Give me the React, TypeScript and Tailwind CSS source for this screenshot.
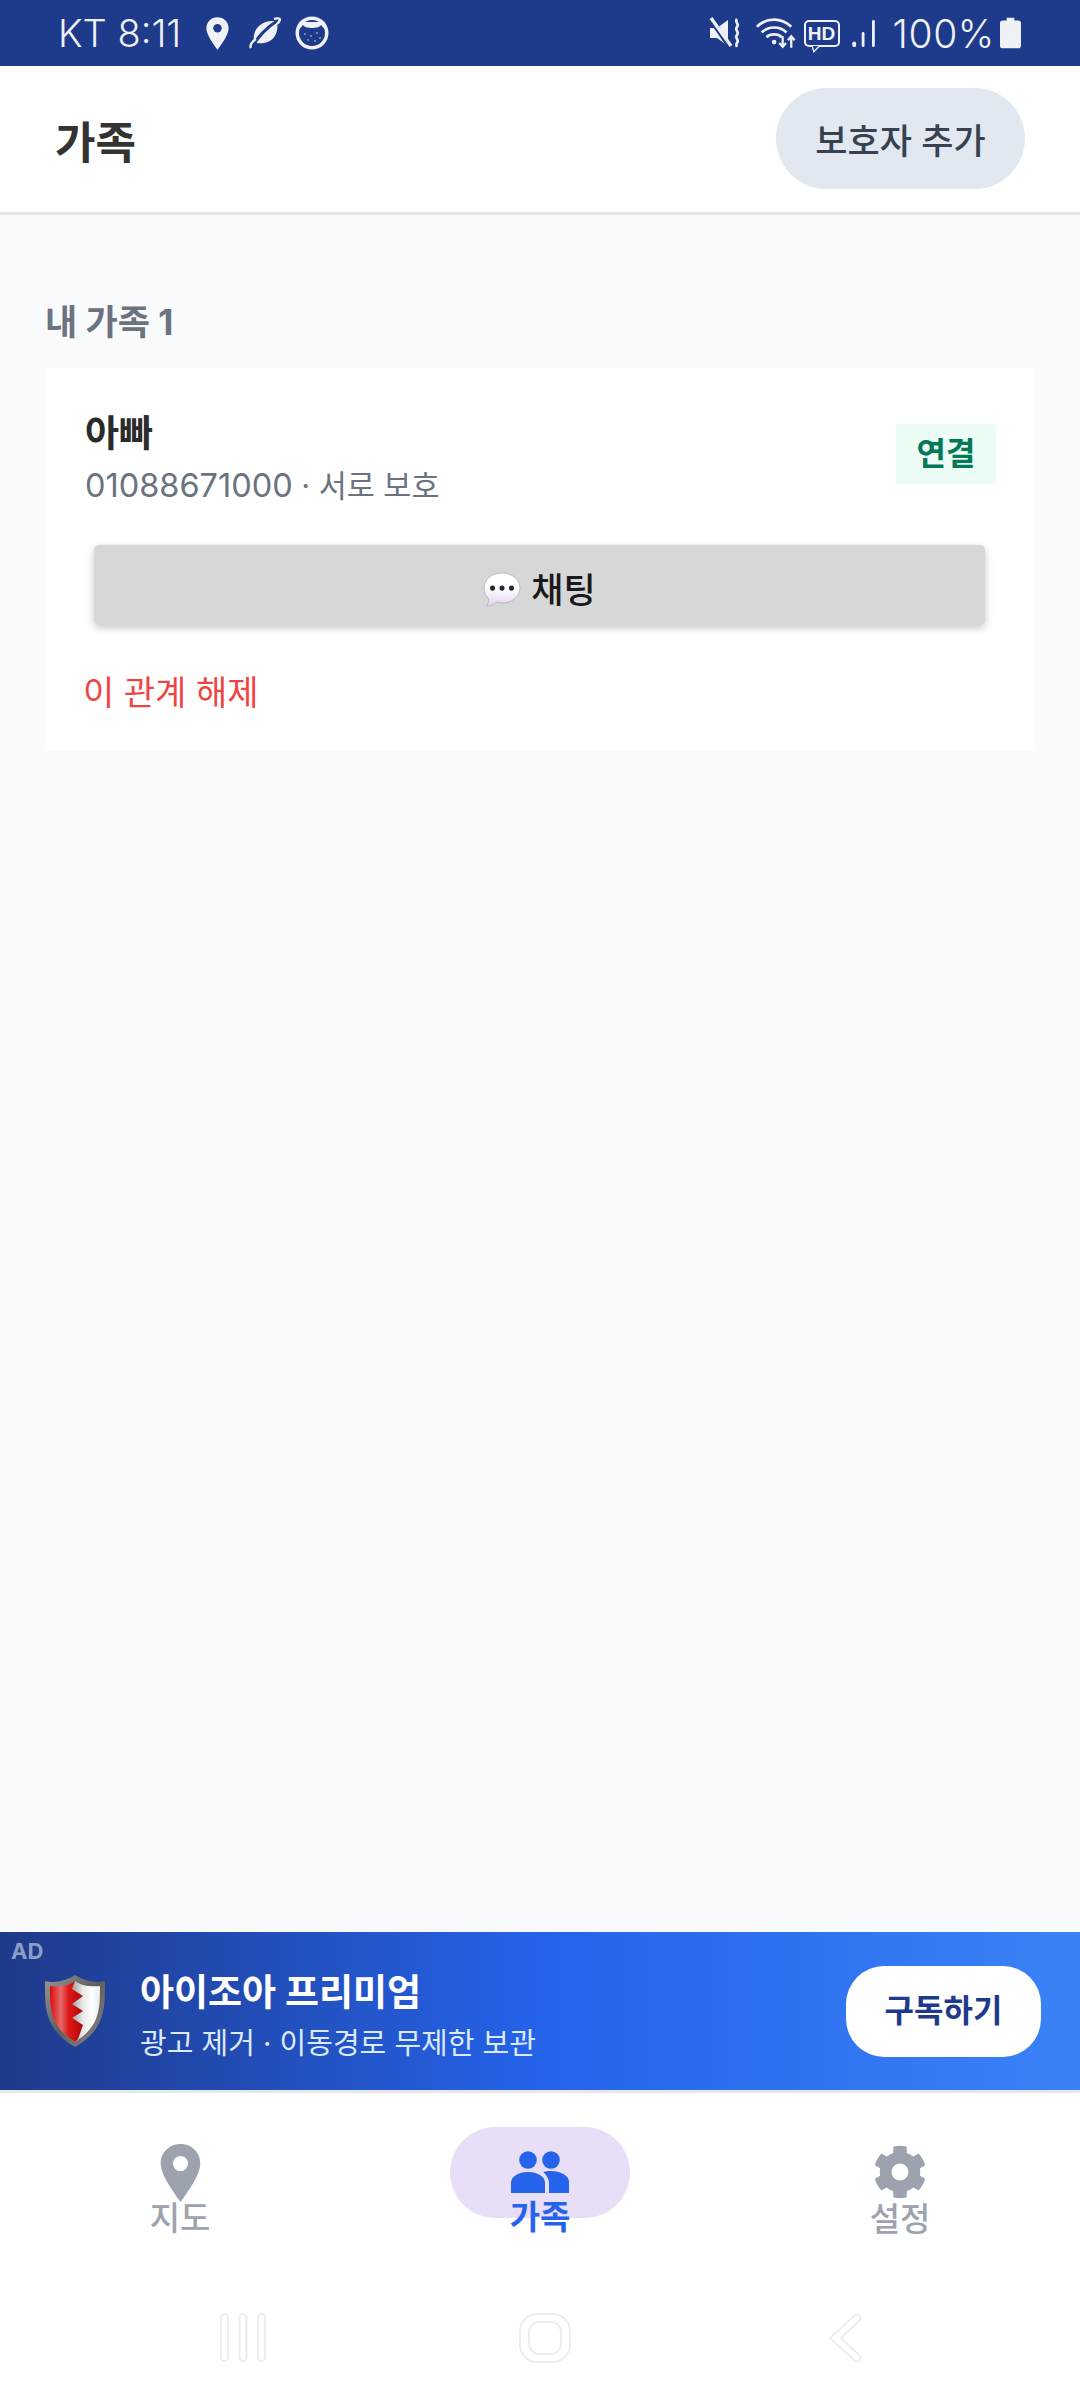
import React from "react";
import { FaCog } from "react-icons/fa";

const kr = "font-['Inter','Noto_Sans_CJK_KR',sans-serif]";

function Pin({ className, hole }: { className?: string; hole: string }) {
  return (
    <svg viewBox="0 0 24 34" className={className}>
      <path d="M12 0C5.4 0 .4 5 .4 11.4 .4 18 7 27 12 34c5-7 11.6-16 11.6-22.6C23.600 5 18.600 0 12 0Z" fill="currentColor" />
      <circle cx="12" cy="11.5" r="4.4" fill={hole} />
    </svg>
  );
}

function StatusLeft() {
  return (
    <div className="flex items-center">
      <span className="w-[129px] whitespace-nowrap text-[38px] leading-none font-light text-[#eff1f7]">KT 8:11</span>
      <Pin className="ml-[19px] w-[23px] h-[33px] text-[#eff1f7]" hole="#1e3a8a" />
      <svg viewBox="0 0 32 34" className="ml-[20px] w-[32px] h-[34px]">
        <path d="M5 25C3 14 12 5 23 5c2 0 4 .4 5 1 2 10-3 20-13 21-4 .4-8 .6-10-2Z" fill="#eff1f7" />
        <path d="M3 31C8 22 18 11 28 5" stroke="#1e3a8a" strokeWidth="3" fill="none" />
        <path d="M2 32C0 29 4 25 7 23M25 3c3-1 6-1 6 1-1 2-2 3-3 4" stroke="#eff1f7" strokeWidth="2.4" fill="none" />
      </svg>
      <svg viewBox="0 0 34 34" className="ml-[14px] w-[34px] h-[34px]">
        <circle cx="17" cy="17" r="16.5" fill="#eff1f7" />
        <circle cx="17" cy="17" r="13" fill="#1e3a8a" />
        <path d="M4 6h26v7c-2-1-3-3-4-4-1 2-4 3-9 3s-8-1-9-3c-1 1-2 3-4 4Z" fill="#eff1f7" />
        <g fill="#8b9ac4">
          <circle cx="10" cy="18" r="1" /><circle cx="16" cy="20" r="1" /><circle cx="22" cy="17" r="1" /><circle cx="13" cy="24" r="1" /><circle cx="20" cy="25" r="1" /><circle cx="25" cy="22" r="1" />
        </g>
      </svg>
    </div>
  );
}

function StatusRight() {
  return (
    <div className="flex items-center">
      <svg viewBox="0 0 32 32" className="w-[32px] h-[32px]">
        <path d="M1 11h7L19 3v26L8 21H1Z" fill="#eff1f7" />
        <path d="M1 1l20 29" stroke="#1e3a8a" strokeWidth="5" />
        <path d="M2 1l20 28" stroke="#eff1f7" strokeWidth="3.400" />
        <path d="M28 2c-3 3 3 5 0 8s3 5 0 8 3 5 0 8c-1 1-1 2 0 4" stroke="#eff1f7" strokeWidth="2.600" fill="none" />
      </svg>
      <svg viewBox="0 0 44 34" className="ml-[14px] w-[42px] h-[33px]">
        <path d="M2 10C12 0 28 0 38 10M7 16C14 9 26 9 33 16M12 21c4-4 12-4 16 0" stroke="#eff1f7" strokeWidth="2.8" fill="none" />
        <circle cx="20" cy="26" r="2.4" fill="#eff1f7" />
        <path d="M29 20v11M25.5 27l3.5 4 3.500-4M38 32V20M34.5 24l3.500-4 3.500 4" stroke="#eff1f7" strokeWidth="2.4" fill="none" />
      </svg>
      <div className="relative ml-[7px] w-[36px] h-[27px] rounded-[5px] border-2 border-[#eff1f7] flex items-center justify-center">
        <span className="text-[19px] leading-none font-bold text-[#eff1f7] font-['Liberation_Sans',sans-serif]">HD</span>
        <svg viewBox="0 0 10 8" className="absolute left-[6px] top-[23px] w-[9px] h-[8px]">
          <path d="M0 0h9L2 7Z" fill="#1e3a8a" stroke="#eff1f7" strokeWidth="1.5" />
        </svg>
      </div>
      <svg viewBox="0 0 28 32" className="ml-[9px] w-[31px] h-[30px]">
        <rect x="1" y="25" width="4" height="6" rx="2" fill="#eff1f7" />
        <rect x="11" y="15" width="3" height="16" rx="1.5" fill="#eff1f7" />
        <rect x="22" y="2" width="3" height="29" rx="1.5" fill="#eff1f7" />
      </svg>
      <span className="ml-[13px] text-[39px] tracking-[0.6px] leading-none font-light text-[#eff1f7]">100%</span>
      <svg viewBox="0 0 22 32" className="ml-[5px] w-[21px] h-[32px]">
        <path d="M7 0h8v3h4a3 3 0 0 1 3 3v23a3 3 0 0 1-3 3H3a3 3 0 0 1-3-3V6a3 3 0 0 1 3-3h4Z" fill="#eff1f7" />
      </svg>
    </div>
  );
}

function ChatEmoji() {
  return (
    <svg viewBox="0 0 40 38" className="w-[38px] h-[36px]">
      <defs>
        <linearGradient id="bubble" x1="0" y1="0" x2="0" y2="1">
          <stop offset="0.45" stopColor="#ffffff" />
          <stop offset="1" stopColor="#e3d3ee" />
        </linearGradient>
      </defs>
      <path d="M20 1C9 1 1 8 1 17c0 5 2 9 5 11 0 3-1 6-2 8 4 0 8-2 10-4 2 .5 4 .8 6 .8 11 0 19-7 19-15.800S31 1 20 1Z" fill="url(#bubble)" stroke="#bdb3c4" strokeWidth="1" />
      <circle cx="10" cy="17" r="2.700" fill="#2a2530" />
      <circle cx="20" cy="17" r="2.700" fill="#2a2530" />
      <circle cx="30" cy="17" r="2.700" fill="#2a2530" />
    </svg>
  );
}

function Shield() {
  return (
    <svg viewBox="0 0 60 72" className="w-[62px] h-[72px]">
      <defs>
        <linearGradient id="rim" x1="0" y1="0" x2="1" y2="1">
          <stop offset="0" stopColor="#989898" />
          <stop offset="0.5" stopColor="#5e5e5e" />
          <stop offset="1" stopColor="#8a8a8a" />
        </linearGradient>
        <linearGradient id="silver" x1="0" y1="0" x2="1" y2="0">
          <stop offset="0.4" stopColor="#8f8f8f" />
          <stop offset="0.65" stopColor="#e8e8e8" />
          <stop offset="0.85" stopColor="#ffffff" />
          <stop offset="1" stopColor="#e8e8e8" />
        </linearGradient>
        <linearGradient id="red" x1="0" y1="0" x2="38" y2="0" gradientUnits="userSpaceOnUse">
          <stop offset="0.15" stopColor="#e01010" />
          <stop offset="0.42" stopColor="#e26a6a" />
          <stop offset="0.62" stopColor="#e01818" />
          <stop offset="1" stopColor="#b00808" />
        </linearGradient>
      </defs>
      <path d="M0 6c8 2 19 1 30-6 11 7 22 8 30 6 0 26 1 48-30 66C-1 54 0 32 0 6Z" fill="url(#rim)" />
      <path d="M5 11c9 1 18 0 25-5 7 5 16 6 25 5 0 23 0 40-25 56C5 51 5 34 5 11Z" fill="url(#silver)" />
      <path d="M5 11c9 1 18 0 25-5L27 14 38 21 27 29 38 36 27 43 38 50 33 64 30 67C5 51 5 34 5 11Z" fill="url(#red)" />
    </svg>
  );
}

function People() {
  return (
    <svg viewBox="0 0 58 42" className="w-[58px] h-[42px] text-[#2563eb]" fill="currentColor">
      <circle cx="17" cy="9" r="8.800" />
      <circle cx="40" cy="9" r="8.800" />
      <path d="M0 42V32c0-7 8-11 17-11s17 4 17 11v10Z" />
      <path d="M38 42V32c0-4-2-8-6-11 2-.5 5-1 8-1 9 0 18 4 18 11v11Z" />
    </svg>
  );
}

export default function App() {
  return (
    <div className={`flex flex-col w-[1080px] h-[2408px] bg-[#f9fafb] ${kr}`}>
      <div className="flex h-[66px] bg-[#1e3a8a] items-center justify-between pl-[58px] pr-[59px]">
        <StatusLeft />
        <StatusRight />
      </div>

      <header className="flex h-[149px] items-center justify-between bg-white border-b-[3px] border-[#e5e7eb] pl-[55px] pr-[55px] pb-[1px]">
        <h1 className="mt-[8px] text-[44px] leading-none font-bold text-[#333333]">가족</h1>
        <button className="w-[249px] h-[101px] pt-[5px] rounded-full bg-[#e2e8f0] text-[35px] font-medium text-[#374151]">보호자 추가</button>
      </header>

      <main className="flex-1 px-[45px] pt-[82px]">
        <h2 className="text-[35px] leading-[50px] font-bold text-[#6b7280]">내 가족 1</h2>
        <section className="mt-[21px] h-[382px] bg-white px-[40px] pt-[40px]">
          <div className="flex items-start justify-between">
            <div>
              <div className="text-[37px] leading-[52px] font-bold text-[#2b2b2b]">아빠</div>
              <div className="mt-[2px] text-[30.5px] leading-[48px] text-[#6b7280]"><span className="text-[32.5px]">01088671000</span> · 서로 보호</div>
            </div>
            <div className="mt-[16px] mr-[-1px] flex w-[100px] h-[60px] items-center justify-center bg-[#ecfdf5] text-[32px] font-bold text-[#047857]">연결</div>
          </div>
          <button className="mt-[35px] ml-[9px] flex w-[891px] h-[80px] pt-[10px] items-center justify-center gap-[10px] rounded-[5px] bg-[#d6d7d7] shadow-[0_3px_8px_rgba(0,0,0,0.22)] text-[35px] font-medium text-[#1a1a1a]">
            <ChatEmoji />
            <span>채팅</span>
          </button>
          <div className="mt-[43px] ml-[-2px] text-[34px] leading-[50px] text-[#ef4444]">이 관계 해제</div>
        </section>
      </main>

      <aside className="relative flex h-[158px] items-center bg-gradient-to-r from-[#1e3a8a] via-[#2563eb] to-[#3b82f6] pl-[44px] pr-[39px]">
        <span className="absolute left-[11px] top-[3px] text-[22px] leading-[32px] font-bold text-white/50">AD</span>
        <Shield />
        <div className="ml-[34px] flex-1 pt-[10px]">
          <div className="text-[37px] leading-[54px] font-bold text-white">아이조아 프리미엄</div>
          <div className="mt-[2px] text-[29px] leading-[44px] text-[#dbeafe]">광고 제거 · 이동경로 무제한 보관</div>
        </div>
        <button className="w-[195px] h-[91px] rounded-[38px] bg-white text-[32px] font-bold text-[#1e3a8a]">구독하기</button>
      </aside>

      <nav className="flex flex-col h-[318px] bg-white border-t-[3px] border-[#e5e7eb]">
        <div className="grid grid-cols-3">
          <div className="flex flex-col items-center pt-[51px]">
            <Pin className="w-[43px] h-[58px] text-[#9ca3af]" hole="#ffffff" />
            <span className="mt-[-3px] text-[33px] leading-[38px] font-medium text-[#9ca3af]">지도</span>
          </div>
          <div className="relative flex flex-col items-center pt-[58px]">
            <div className="absolute left-[90px] top-[34px] w-[180px] h-[91px] rounded-full bg-[#e8def8]" />
            <div className="relative"><People /></div>
            <span className="relative mt-[5px] text-[33px] leading-[38px] font-bold text-[#2563eb]">가족</span>
          </div>
          <div className="flex flex-col items-center pt-[52px]">
            <FaCog className="w-[54px] h-[54px] text-[#9ca3af]" />
            <span className="mt-[1px] text-[33px] leading-[38px] font-medium text-[#9ca3af]">설정</span>
          </div>
        </div>
        <div className="mt-[75px] flex h-[50px] pl-[220px]">
          <svg viewBox="0 0 46 50" className="w-[46px] h-[50px]" fill="none" stroke="#eeeeee" strokeWidth="2">
            <rect x="1" y="1" width="7" height="47" rx="3.500" />
            <rect x="19.500" y="1" width="7" height="47" rx="3.500" />
            <rect x="38" y="1" width="7" height="47" rx="3.500" />
          </svg>
          <svg viewBox="0 0 52 50" className="ml-[253px] w-[52px] h-[50px]" fill="none" stroke="#eeeeee" strokeWidth="2">
            <rect x="1" y="1" width="50" height="48" rx="17" />
            <rect x="10" y="9" width="32" height="32" rx="10" />
          </svg>
          <svg viewBox="0 0 34 50" className="ml-[258px] w-[34px] h-[50px]" fill="none" stroke="#eeeeee" strokeWidth="2">
            <path d="M1 25 26 2c3-2 7 2 5 5L12 25l19 18c2 3-2 7-5 5Z" />
          </svg>
        </div>
      </nav>
    </div>
  );
}
